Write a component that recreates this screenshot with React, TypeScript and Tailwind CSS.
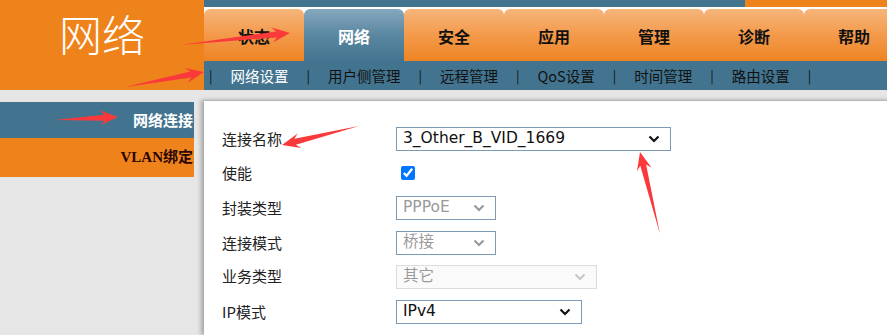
import React from "react";

const tabs = ["状态", "网络", "安全", "应用", "管理", "诊断", "帮助"];
const subItems = ["网络设置", "用户侧管理", "远程管理", "QoS设置", "时间管理", "路由设置"];

// annotation arrows drawn on top of the screenshot: tail -> tip
const arrows = [
  { x1: 180, y1: 45, x2: 290, y2: 33 },
  { x1: 125, y1: 87, x2: 204, y2: 72 },
  { x1: 55, y1: 120, x2: 118, y2: 117 },
  { x1: 359, y1: 126, x2: 282, y2: 145 },
  { x1: 660, y1: 234, x2: 640, y2: 152 },
];

const arrowPoints = (a: { x1: number; y1: number; x2: number; y2: number }) => {
  const dx = a.x2 - a.x1;
  const dy = a.y2 - a.y1;
  const len = Math.hypot(dx, dy);
  const ux = dx / len;
  const uy = dy / len;
  const nx = -uy;
  const ny = ux;
  const head = 18;
  const neckX = a.x2 - ux * head * 0.75;
  const neckY = a.y2 - uy * head * 0.75;
  const wingX = a.x2 - ux * head;
  const wingY = a.y2 - uy * head;
  const bw = 3;
  const hw = 7.5;
  const pts = [
    [a.x1, a.y1],
    [neckX + nx * bw, neckY + ny * bw],
    [wingX + nx * hw, wingY + ny * hw],
    [a.x2, a.y2],
    [wingX - nx * hw, wingY - ny * hw],
    [neckX - nx * bw, neckY - ny * bw],
  ];
  return pts.map((p) => p.join(",")).join(" ");
};

const Chevron = ({ color = "#111" }: { color?: string }) => (
  <svg width="12" height="8" viewBox="0 0 12 8" className="shrink-0">
    <path d="M1.5 1.5 L6 6 L10.5 1.5" fill="none" stroke={color} strokeWidth="2.2" />
  </svg>
);

const FakeSelect = ({
  value,
  width,
  disabled,
  faint,
}: {
  value: string;
  width: string;
  disabled?: boolean;
  faint?: boolean;
}) => (
  <div
    className={`${width} h-[24px] flex items-center justify-between pl-[6px] pr-[10px] border ${
      faint ? "border-[#dcdcdc] bg-[#fafafa]" : "border-[#7d9bb4] bg-white"
    } ${disabled ? "text-[#9a9a9a]" : "text-[#111]"} text-[15.5px]`}
    style={{ fontFamily: '"DejaVu Sans", "Noto Sans CJK SC", sans-serif' }}
  >
    <span className="leading-none">{value}</span>
    <Chevron color={disabled ? (faint ? "#c8c8c8" : "#9a9a9a") : "#111"} />
  </div>
);

const rows: { label: string; h: string; field: React.ReactNode }[] = [
  { label: "连接名称", h: "h-[34px]", field: <FakeSelect value="3_Other_B_VID_1669" width="w-[275px]" /> },
  {
    label: "使能",
    h: "h-[34px]",
    field: (
      <input
        type="checkbox"
        defaultChecked
        className="ml-[5px] w-[14px] h-[14px] accent-[#0075ff]"
      />
    ),
  },
  { label: "封装类型", h: "h-[36px]", field: <FakeSelect value="PPPoE" width="w-[100px]" disabled /> },
  { label: "连接模式", h: "h-[34px]", field: <FakeSelect value="桥接" width="w-[100px]" disabled /> },
  { label: "业务类型", h: "h-[33px]", field: <FakeSelect value="其它" width="w-[201px]" disabled faint /> },
  { label: "IP模式", h: "h-[38px]", field: <FakeSelect value="IPv4" width="w-[186px]" /> },
];

export default function App() {
  return (
    <div
      className="relative w-[887px] h-[335px] overflow-hidden flex bg-[#e6e6e6]"
      style={{ fontFamily: '"Noto Sans CJK SC", "Noto Sans", sans-serif' }}
    >
      {/* left column */}
      <div className="w-[204px] shrink-0 flex flex-col">
        <div className="h-[90px] bg-[#ef831b] flex justify-center pt-[5px]">
          <span className="text-white text-[43px] leading-[56px] font-light">网络</span>
        </div>
        <div className="h-[12px]" />
        <div className="w-[194px] h-[36px] bg-[#43748f] flex items-center justify-end pr-[1px]">
          <span className="text-white font-bold text-[15px]">网络连接</span>
        </div>
        <div className="w-[194px] h-[39px] bg-[#ef831b] flex items-center justify-end pr-[1px]">
          <span
            className="text-[#2a0505] font-bold text-[15px]"
            style={{ fontFamily: '"Liberation Serif", "Noto Sans CJK SC", serif' }}
          >
            VLAN绑定
          </span>
        </div>
      </div>

      {/* right column */}
      <div className="flex-1 flex flex-col">
        <div className="h-[7px] flex">
          <div className="w-[541px] bg-[#43748f]" />
          <div className="flex-1 bg-[#ef831b]" />
        </div>
        <div className="h-[2px] bg-white" />
        <div className="h-[52px] flex bg-white">
          {tabs.map((t, i) => (
            <div
              key={t}
              className={`w-[100px] shrink-0 flex items-center justify-center rounded-t-[6px] text-[16px] font-bold pt-[2px] ${
                i === 1
                  ? "bg-gradient-to-b from-[#86a8bd] via-[#5a87a1] to-[#43748f] text-white"
                  : "bg-gradient-to-b from-[#f6b57a] via-[#f39a4a] to-[#ee8420] text-[#111]"
              }`}
            >
              {t}
            </div>
          ))}
        </div>
        <div className="h-[29px] bg-[#43748f] flex items-center text-[14.5px] pl-[5px]">
          {subItems.map((s, i) => (
            <React.Fragment key={s}>
              <span className="text-[#111] text-[13px]">|</span>
              <span className={`px-[18px] ${i === 0 ? "text-white" : "text-[#111]"}`}>{s}</span>
            </React.Fragment>
          ))}
          <span className="text-[#111] text-[13px]">|</span>
        </div>
        <div className="h-[10px]" />
        <div className="flex-1 bg-white border-t border-[#b5b5b5] shadow-[-3px_0_4px_rgba(0,0,0,0.28)] pl-[18px] pt-[21px]">
          {rows.map((r) => (
            <div key={r.label} className={`${r.h} flex items-center`}>
              <span className="w-[174px] shrink-0 text-[15px] text-[#222]">{r.label}</span>
              {r.field}
            </div>
          ))}
        </div>
      </div>

      <svg className="absolute inset-0 pointer-events-none" width="887" height="335">
        {arrows.map((a, i) => (
          <polygon key={i} points={arrowPoints(a)} fill="#fa3a3a" />
        ))}
      </svg>
    </div>
  );
}
